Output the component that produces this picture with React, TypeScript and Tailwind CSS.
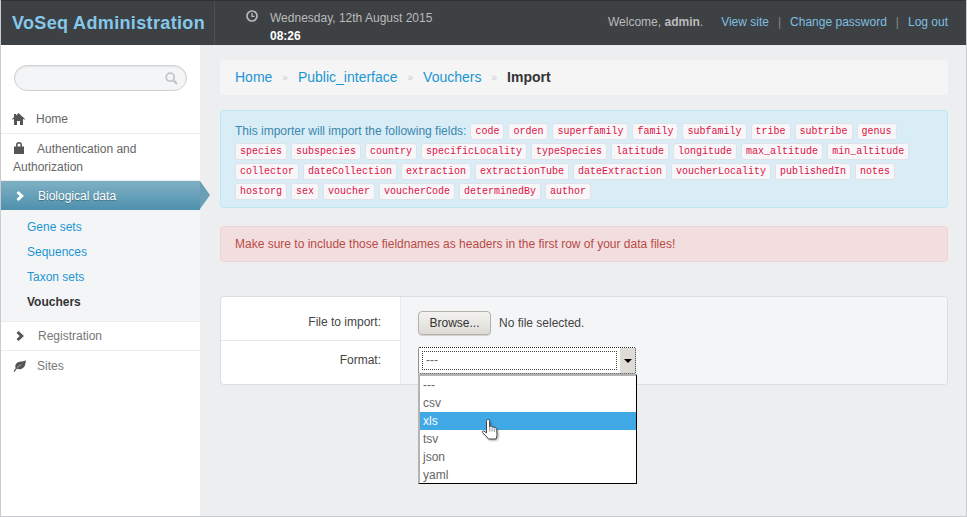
const fields = [
  ["code", "orden", "superfamily", "family", "subfamily", "tribe", "subtribe", "genus"],
  ["species", "subspecies", "country", "specificLocality", "typeSpecies", "latitude", "longitude", "max_altitude", "min_altitude"],
  ["collector", "dateCollection", "extraction", "extractionTube", "dateExtraction", "voucherLocality", "publishedIn", "notes"],
  ["hostorg", "sex", "voucher", "voucherCode", "determinedBy", "author"],
];

const subItems = ["Gene sets", "Sequences", "Taxon sets"];
const options = ["---", "csv", "xls", "tsv", "json", "yaml"];

const Code = ({ children }: { children: string }) => (
  <code className="inline-block h-[17px] px-[4px] mr-[4px] leading-[15px] text-[10px] font-['Liberation_Mono',monospace] text-[#dd1144] bg-[#f7f7f9] border border-[#e1e1e8] rounded-[3px]">
    {children}
  </code>
);

const HomeIcon = () => (
  <svg viewBox="0 0 13 12" className="w-[13px] h-[12px] fill-[#555]">
    <path d="M6.5 0 13 6l-.8.8L11 5.7V12H8V8H5v4H2V5.7L.8 6.8 0 6l2-1.8V1h2v1.4z" />
  </svg>
);

const LockIcon = () => (
  <svg viewBox="0 0 12 12" className="w-[12px] h-[12px] fill-[#555]">
    <path d="M3 4.500V3a3 3 0 0 1 6 0v1.500h2V12H1V4.500zM4.500 4.500h3V3a1.500 1.500 0 0 0-3 0z" />
  </svg>
);

const ChevronIcon = ({ className }: { className: string }) => (
  <svg viewBox="0 0 8 10" className={className}>
    <path d="M2.500 0 8 5l-5.500 5L.5 8l3.200-3L.5 2z" />
  </svg>
);

const LeafIcon = () => (
  <svg viewBox="0 0 13 12" className="w-[13px] h-[12px] fill-[#555]">
    <path d="M13 0c-.5 4-1 8-5 9-1.500.4-3 .2-4.200-.3L1.500 12 .5 11.300l2.300-3.200C1.800 6.500 2.300 3.500 5 2.300 7.500 1.200 11 2 13 0zM9 4C7 4.800 5 6.300 3.800 8 5.500 6.700 7.300 5.400 9 4z" fillRule="evenodd" />
  </svg>
);

const HandCursor = () => (
  <svg viewBox="0 0 22 24" className="absolute left-[61px] top-[42px] w-[22px] h-[24px]">
    <path
      d="M7 1.500c1 0 1.600.7 1.600 1.700v6l.2-1c1.300-.4 2 .2 2.200 1 .9-.6 2-.2 2.300.8 1-.5 2.300 0 2.400 1.300l.3 5.200c0 1.800-.4 3-1 4.500H7.500c-.6-1.200-2-2.500-3.300-3.800L1.500 14.500c-.6-1 .2-2 1.300-1.600l2.700 2V3.200C5.500 2.200 6 1.500 7 1.500z"
      fill="#fff"
      stroke="#444"
      strokeWidth="1"
      strokeLinejoin="round"
      style={{ filter: "drop-shadow(1px 1px 1px rgba(0,0,0,.35))" }}
    />
    <path d="M8.800 9.500v4M11 10v3.500M13.300 11v3" stroke="#777" strokeWidth="0.800" />
  </svg>
);

export default function App() {
  return (
    <div className="w-[967px] h-[517px] overflow-hidden flex flex-col bg-[#edeef0] border-x border-b border-[#c9cbce] font-['Liberation_Sans',Arial,sans-serif] text-[12px] text-[#555]">
      <header className="h-[45px] shrink-0 flex items-stretch bg-[#3d4144] border-t border-[#2f3234]">
        <div className="w-[214px] shrink-0 border-r border-[#4d5053] pl-[11px] pt-[11px] text-[18px] leading-[22px] font-bold tracking-[0.35px] text-[#86c8ea] whitespace-nowrap">
          VoSeq Administration
        </div>
        <div className="pl-[31px] pt-[8px] flex gap-[12px]">
          <svg viewBox="0 0 12 12" className="w-[12px] h-[12px] mt-[1px] fill-none stroke-[#bbb] stroke-[1.700]">
            <circle cx="6" cy="6" r="5" />
            <path d="M6 3v3.300h2.600" strokeWidth="1.300" />
          </svg>
          <div className="leading-[18px]">
            <div className="text-[#bbb]">Wednesday, 12th August 2015</div>
            <div className="font-bold text-white">08:26</div>
          </div>
        </div>
        <div className="ml-auto pr-[18px] pt-[13px] flex leading-[16px] text-[#bbb] whitespace-nowrap">
          <span className="mr-[18px]">
            Welcome, <b>admin</b>.
          </span>
          <a className="text-[#7fbfe0]">View site</a>
          <span className="mx-[9px] text-[#888]">|</span>
          <a className="text-[#7fbfe0]">Change password</a>
          <span className="mx-[9px] text-[#888]">|</span>
          <a className="text-[#7fbfe0]">Log out</a>
        </div>
      </header>

      <div className="flex flex-1 min-h-0">
        <aside className="w-[199px] shrink-0 bg-white">
          <div className="px-[13px] pt-[20px] pb-[14px]">
            <div className="h-[26px] rounded-[13px] border border-[#d0d1d3] bg-[#f4f5f7] shadow-[inset_0_1px_2px_rgba(0,0,0,0.08)] flex items-center justify-end pr-[8px]">
              <svg viewBox="0 0 13 13" className="w-[13px] h-[13px] fill-none stroke-[#c4c5c7]">
                <circle cx="5.200" cy="5.200" r="4" strokeWidth="1.800" />
                <path d="M8.200 8.200 12 12" strokeWidth="2.400" />
              </svg>
            </div>
          </div>

          <div className="flex items-center h-[29px] border-b border-[#ecedef] pl-[11px] gap-[11px]">
            <HomeIcon />
            <span className="text-[#666]">Home</span>
          </div>
          <div className="h-[47px] border-b border-[#ecedef] pl-[12px] pt-[6px] leading-[18px] text-[#666]">
            <span className="inline-block align-[-1px] mr-[12px]">
              <LockIcon />
            </span>
            Authentication and
            <br />
            Authorization
          </div>
          <div className="relative h-[29px] flex items-center pl-[15px] gap-[14px] text-white bg-gradient-to-b from-[#7fb1c4] to-[#4e90ad] [text-shadow:0_1px_1px_rgba(0,0,0,0.3)]">
            <ChevronIcon className="w-[8px] h-[10px] fill-white" />
            <span>Biological data</span>
            <span className="absolute left-full top-0 border-y-[14.500px] border-y-transparent border-l-[10px] border-l-[#6a9fb7]" />
          </div>
          <div className="bg-[#f4f5f7] border-b border-[#ecedef] pt-[5px] pb-[6px] pl-[26px] leading-[25px] text-[#1b96d3]">
            {subItems.map((item) => (
              <div key={item}>{item}</div>
            ))}
            <div className="font-bold text-[#333]">Vouchers</div>
          </div>
          <div className="flex items-center h-[29px] border-b border-[#ecedef] pl-[15px] gap-[14px] text-[#777]">
            <ChevronIcon className="w-[8px] h-[10px] fill-[#555]" />
            <span>Registration</span>
          </div>
          <div className="flex items-center h-[29px] pl-[12px] gap-[11px] text-[#777]">
            <LeafIcon />
            <span>Sites</span>
          </div>
        </aside>

        <main className="flex-1 min-w-0 pt-[15px] pl-[20px] pr-[18px]">
          <nav className="h-[35px] flex items-center rounded-[4px] bg-[#f5f5f5] pl-[15px] text-[14px] text-[#1b96d3]">
            <a>Home</a>
            <span className="mx-[10px] text-[10px] text-[#ccc]">»</span>
            <a>Public_interface</a>
            <span className="mx-[10px] text-[10px] text-[#ccc]">»</span>
            <a>Vouchers</a>
            <span className="mx-[10px] text-[10px] text-[#ccc]">»</span>
            <b className="text-[#333]">Import</b>
          </nav>

          <div className="mt-[15px] h-[98px] rounded-[4px] border border-[#bce8f1] bg-[#d9edf7] pl-[14px] pt-[10px] text-[#3a87ad]">
            {fields.map((row, i) => (
              <div key={i} className="flex items-center h-[20px] whitespace-nowrap">
                {i === 0 && <span className="mr-[4px]">This importer will import the following fields:</span>}
                {row.map((name) => (
                  <Code key={name}>{name}</Code>
                ))}
              </div>
            ))}
          </div>

          <div className="mt-[18px] h-[36px] flex items-center rounded-[4px] border border-[#eed3d7] bg-[#f2dede] pl-[14px] text-[#b94a48]">
            Make sure to include those fieldnames as headers in the first row of your data files!
          </div>

          <div className="relative mt-[34px] h-[89px] rounded-[4px] border border-[#dcdde0] bg-white flex">
            <div className="w-[180px] shrink-0 border-r border-[#e8e9eb] text-right">
              <div className="h-[44px] border-b border-[#e8e9eb] pr-[19px] pt-[17px] leading-[16px] text-[#444]">File to import:</div>
              <div className="pr-[19px] pt-[11px] leading-[16px] text-[#444]">Format:</div>
            </div>
            <div className="flex-1 bg-[#f4f5f7] rounded-r-[4px] pl-[17px] pt-[14px]">
              <div className="flex items-center h-[24px] text-[#444]">
                <button className="h-[24px] w-[73px] rounded-[4px] border border-[#b4b1ab] bg-gradient-to-b from-[#f4f3f1] to-[#dedbd6] text-[#333] shadow-[0_1px_1px_rgba(0,0,0,0.15)]">
                  Browse...
                </button>
                <span className="ml-[8px]">No file selected.</span>
              </div>
              <div className="relative mt-[12px] h-[27px] w-[218px] rounded-[2px] border border-dotted border-[#222] bg-white flex">
                <div className="m-[3px] flex-1 border border-dotted border-[#444] pl-[3px] text-[#666] leading-[17px]">---</div>
                <div className="w-[15px] bg-[#dfdcd8] flex items-center justify-center">
                  <span className="border-x-[4px] border-x-transparent border-t-[4px] border-t-black" />
                </div>
                <div className="absolute left-[-1px] top-[26px] w-[219px] h-[110px] bg-white border-l-2 border-t-2 border-l-[#b3b3b3] border-t-[#b3b3b3] border-r border-b border-r-black border-b-black text-[#666] leading-[18px]">
                  {options.map((opt) => (
                    <div key={opt} className={opt === "xls" ? "pl-[3px] h-[18px] bg-[#41a8e6] text-white" : "pl-[3px] h-[18px]"}>
                      {opt}
                    </div>
                  ))}
                  <HandCursor />
                </div>
              </div>
            </div>
          </div>
        </main>
      </div>
    </div>
  );
}
